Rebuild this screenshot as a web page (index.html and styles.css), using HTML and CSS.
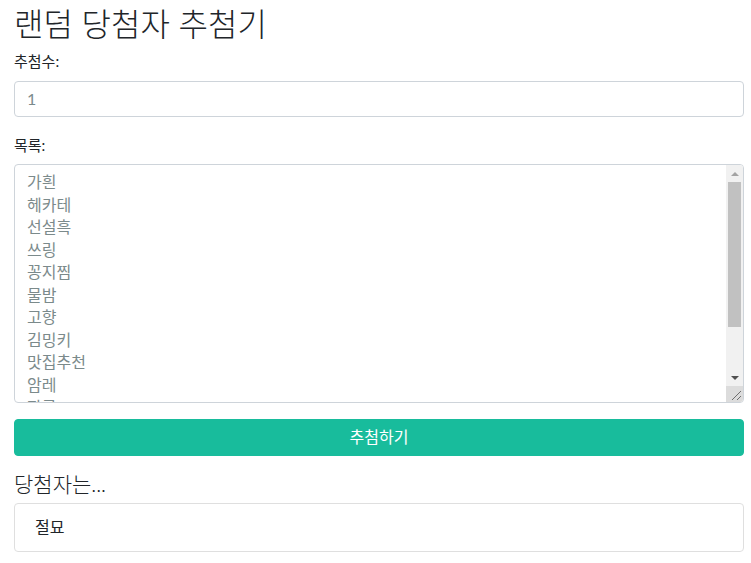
FILE: index.html
```html
<!DOCTYPE html>
<html lang="ko">
<head>
<meta charset="utf-8">
<title>랜덤 당첨자 추첨기</title>
<link rel="stylesheet" href="styles.css">
</head>
<body>
<div class="container">
  <h1 class="title">랜덤 당첨자 추첨기</h1>
  <form class="form">
    <div class="form-group">
      <label class="label" for="count">추첨수:</label>
      <input class="form-control" id="count" type="text" value="1">
    </div>
    <div class="form-group form-group-list">
      <label class="label" for="list">목록:</label>
      <div class="textarea-wrap">
        <textarea class="form-control textarea" id="list" rows="10">가흰
헤카테
선설흑
쓰링
꽁지찜
물밤
고향
김밍키
맛집추천
암레
잡곡
하늘
바람
별빛</textarea>
        <div class="fake-scroll" aria-hidden="true">
          <span class="sb-btn"><span class="arrow-up"></span></span>
          <span class="sb-track"><span class="sb-thumb"></span></span>
          <span class="sb-btn"><span class="arrow-down"></span></span>
          <span class="sb-corner">
            <svg width="17" height="16" viewBox="0 0 17 16">
              <line x1="15" y1="5" x2="6" y2="14" stroke="#6e6e6e" stroke-width="1"/>
              <line x1="15" y1="10" x2="11" y2="14" stroke="#6e6e6e" stroke-width="1"/>
            </svg>
          </span>
        </div>
      </div>
    </div>
    <button type="button" class="btn">추첨하기</button>
  </form>
  <h5 class="result-title">당첨자는...</h5>
  <ul class="list-group">
    <li class="list-group-item">절묘</li>
  </ul>
</div>
</body>
</html>
```
FILE: styles.css
```css
* { box-sizing: border-box; }
html, body { margin: 0; padding: 0; }
body {
  font-family: "Lato", "Noto Sans CJK KR", sans-serif;
  font-size: 16px;
  line-height: 22.5px;
  color: #212529;
  background: #fff;
}
.container {
  padding: 5px 7px 0 14px;
}
.title {
  margin: 0 0 7px 0;
  font-size: 32px;
  font-weight: 300;
  line-height: 38px;
  color: #212529;
}
.form-group { margin-bottom: 16px; }
.form-group-list { padding-top: 1px; }
.label {
  display: inline-block;
  margin-bottom: 8px;
  font-size: 15px;
}
.form-control {
  display: block;
  width: 100%;
  height: 36px;
  padding: 6px 12px;
  font-family: "Lato", "Noto Sans CJK KR", sans-serif;
  font-size: 16px;
  line-height: 22.5px;
  color: #7b8a8b;
  background: #fff;
  border: 1px solid #ced4da;
  border-radius: 4px;
  outline: none;
}
.textarea-wrap {
  position: relative;
}
.textarea {
  height: 239px;
  resize: none;
  overflow: hidden;
  padding-right: 30px;
}
.fake-scroll {
  position: absolute;
  top: 1px;
  right: 1px;
  bottom: 1px;
  width: 17px;
  display: flex;
  flex-direction: column;
  background: #f1f1f1;
  border-top-right-radius: 3px;
  border-bottom-right-radius: 3px;
  overflow: hidden;
}
.sb-btn {
  height: 17px;
  flex: 0 0 17px;
  display: flex;
  align-items: center;
  justify-content: center;
}
.arrow-up {
  width: 0;
  height: 0;
  border-left: 4px solid transparent;
  border-right: 4px solid transparent;
  border-bottom: 4px solid #a3a3a3;
}
.arrow-down {
  width: 0;
  height: 0;
  border-left: 4px solid transparent;
  border-right: 4px solid transparent;
  border-top: 4px solid #505050;
}
.sb-track {
  flex: 1;
  display: flex;
  flex-direction: column;
  padding: 0 2px;
}
.sb-thumb {
  height: 145px;
  background: #c1c1c1;
}
.sb-corner {
  flex: 0 0 16px;
  height: 16px;
  background: #dcdcdc;
  display: block;
}
.sb-corner svg { display: block; }
.btn {
  display: block;
  width: 100%;
  height: 37px;
  margin-bottom: 16px;
  padding: 6px 12px;
  font-family: "Lato", "Noto Sans CJK KR", sans-serif;
  font-size: 16px;
  line-height: 22.5px;
  color: #fff;
  background: #18bc9c;
  border: 1px solid #18bc9c;
  border-radius: 4px;
}
.result-title {
  margin: 0 0 7px 0;
  font-size: 21px;
  font-weight: 300;
  line-height: 24px;
}
.list-group {
  list-style: none;
  margin: 0;
  padding: 0;
}
.list-group-item {
  padding: 12px 20px;
  border: 1px solid #dfdfdf;
  border-radius: 4px;
  font-size: 16px;
  line-height: 22.5px;
}
```
